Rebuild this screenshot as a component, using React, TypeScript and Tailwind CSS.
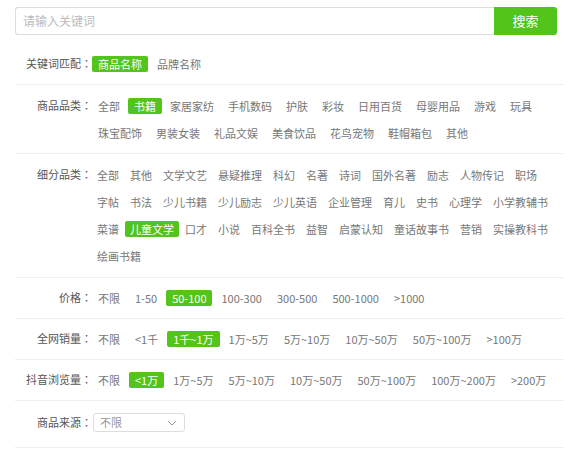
import React from 'react';

type Row = {
  label: string;
  items: string[];
  active?: string;
  gap: 'cat' | 'sub' | 'std';
  pad: string;
};

const rows: Row[] = [
  { label: '关键词匹配', items: ['商品名称', '品牌名称'], active: '商品名称', gap: 'std', pad: 'pt-[7px] pb-[7px]' },
  {
    label: '商品品类',
    items: ['全部', '书籍', '家居家纺', '手机数码', '护肤', '彩妆', '日用百货', '母婴用品', '游戏', '玩具', '珠宝配饰', '男装女装', '礼品文娱', '美食饮品', '花鸟宠物', '鞋帽箱包', '其他'],
    active: '书籍',
    gap: 'cat',
    pad: 'pt-[7px] pb-[7px]',
  },
  {
    label: '细分品类',
    items: ['全部', '其他', '文学文艺', '悬疑推理', '科幻', '名著', '诗词', '国外名著', '励志', '人物传记', '职场', '字帖', '书法', '少儿书籍', '少儿励志', '少儿英语', '企业管理', '育儿', '史书', '心理学', '小学教辅书', '菜谱', '儿童文学', '口才', '小说', '百科全书', '益智', '启蒙认知', '童话故事书', '营销', '实操教科书', '绘画书籍'],
    active: '儿童文学',
    gap: 'sub',
    pad: 'pt-[7px] pb-[8px]',
  },
  { label: '价格', items: ['不限', '1-50', '50-100', '100-300', '300-500', '500-1000', '>1000'], active: '50-100', gap: 'std', pad: 'pt-[6px] pb-[7px]' },
  { label: '全网销量', items: ['不限', '<1千', '1千~1万', '1万~5万', '5万~10万', '10万~50万', '50万~100万', '>100万'], active: '1千~1万', gap: 'std', pad: 'pt-[6px] pb-[7px]' },
  { label: '抖音浏览量', items: ['不限', '<1万', '1万~5万', '5万~10万', '10万~50万', '50万~100万', '100万~200万', '>200万'], active: '<1万', gap: 'std', pad: 'pt-[6px] pb-[7px]' },
];

const gapCls = {
  cat: 'px-[6px] mr-[2px]',
  sub: 'px-[5px] mr-[1px]',
  std: 'px-[6px] mr-[3px]',
};

// 全角冒号居中显示
const Colon = () => <span className="font-['Noto_Sans_CJK_TC',sans-serif]">：</span>;

function FilterRow({ row }: { row: Row }) {
  return (
    <div className={`flex border-b border-[#eeeeee] ${row.pad}`}>
      <div className="w-[77px] shrink-0 text-right h-[27px] leading-[27px] text-[#555] whitespace-nowrap">
        {row.label}
        <Colon />
      </div>
      <div className="flex flex-wrap flex-1">
        {row.items.map((it) => (
          <div key={it} className="h-[27px] flex items-center">
            <span
              className={`${gapCls[row.gap]} h-[16px] leading-[16px] rounded-[2px] whitespace-nowrap ${
                it === row.active ? 'bg-[#52c41a] text-white' : 'text-[#777]'
              }`}
            >
              {it}
            </span>
          </div>
        ))}
      </div>
    </div>
  );
}

export default function App() {
  return (
    <div className="w-[575px] h-[449px] bg-white pt-[7px] pl-[15px] text-[11px] font-['Noto_Sans_CJK_SC','Noto_Sans',sans-serif] overflow-hidden">
      {/* search */}
      <div className="flex h-[28px] w-[542px]">
        <div className="flex-1 border border-r-0 border-[#dddddd] rounded-l-[3px] flex items-center pl-[7px] text-[12px] text-[#bbbbbb]">
          请输入关键词
        </div>
        <button className="w-[63px] bg-[#52c41a] text-white text-[13px] rounded-r-[3px]">搜索</button>
      </div>

      <div className="mt-[8px] w-[549px]">
        {rows.map((r) => (
          <FilterRow key={r.label} row={r} />
        ))}

        {/* source select */}
        <div className="flex border-b border-[#eeeeee] pt-[12px] pb-[15px]">
          <div className="w-[77px] shrink-0 text-right h-[19px] leading-[19px] text-[#555]">
            商品来源
            <Colon />
          </div>
          <div className="ml-[1px] w-[92px] h-[19px] border border-[#dddddd] rounded-[3px] flex items-center justify-between pl-[6px] pr-[7px] text-[#999]">
            <span className="leading-[17px]">不限</span>
            <svg width="10" height="6" viewBox="0 0 10 6" fill="none">
              <polyline points="1,1 5,5 9,1" stroke="#999" strokeWidth="1" />
            </svg>
          </div>
        </div>
      </div>
    </div>
  );
}
